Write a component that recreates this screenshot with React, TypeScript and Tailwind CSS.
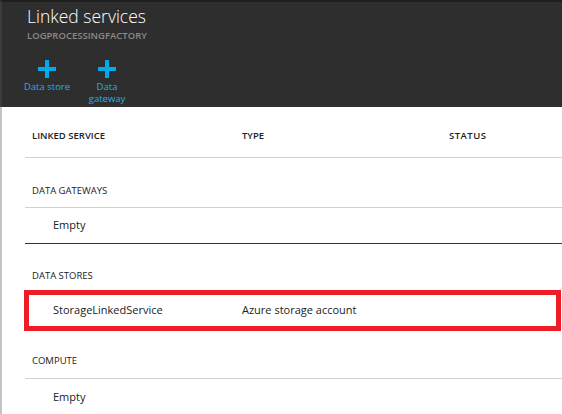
import { ReactNode } from 'react'

const font = { fontFamily: '"Open Sans", "Liberation Sans", sans-serif' }

function PlusIcon() {
  return (
    <svg width="18" height="18" viewBox="0 0 18 18" className="block">
      <rect x="7" y="0" width="4" height="18" fill="#00abec" />
      <rect x="0" y="7" width="18" height="4" fill="#00abec" />
    </svg>
  )
}

function Command({ label }: { label: ReactNode }) {
  return (
    <div className="flex w-[56px] flex-col items-center">
      <PlusIcon />
      <div className="mt-[3px] text-center text-[9.5px] leading-[12px] text-[#1fb0e8]">{label}</div>
    </div>
  )
}

function SectionTitle({ children, className }: { children: ReactNode; className: string }) {
  return (
    <div className={`flex items-end border-b border-[#d0d0d0] pl-[7px] text-[9.5px] uppercase text-[#222] ${className}`}>
      {children}
    </div>
  )
}

export default function App() {
  return (
    <div className="h-[414px] w-[562px] overflow-hidden bg-white" style={font}>
      <div className="h-[107px] border-t-2 border-l-2 border-t-[#1e1e1e] border-l-[#3c3c3c] bg-[#2e2e2e]">
        <div className="pl-[25px] pt-[3px]">
          <h1 className="text-[17.5px] font-light leading-[22px] text-white">Linked services</h1>
          <p className="mt-[3px] text-[9.5px] font-semibold leading-[12px] text-[#8a8a8a]">LOGPROCESSINGFACTORY</p>
        </div>
        <div className="mt-[18px] flex gap-[4px] pl-[17px]">
          <Command label="Data store" />
          <Command label={<>Data<br />gateway</>} />
        </div>
      </div>

      <div className="h-[307px] border-l-2 border-l-[#c4c4c4] pl-[23px]">
        <div className="flex h-[51px] items-end border-b border-[#d0d0d0] pb-[14px] pl-[7px] text-[9.5px] font-semibold text-[#222]">
          <div className="w-[210px]">LINKED SERVICE</div>
          <div className="w-[207px]">TYPE</div>
          <div className="tracking-[0.5px]">STATUS</div>
        </div>

        <SectionTitle className="h-[50px] pb-[9px]">Data gateways</SectionTitle>
        <div className="flex h-[36px] items-center border-b border-[#333] pl-[28px] text-[11px] text-[#222]">Empty</div>

        <div className="flex h-[46px] items-end pb-[7px] pl-[7px] text-[9.5px] uppercase text-[#222]">Data stores</div>
        <div className="-ml-px mr-px flex h-[41px] items-center border-[5px] border-[#ee1c25] pl-[24px] text-[11px] text-[#222]">
          <div className="w-[189px]">StorageLinkedService</div>
          <div>Azure storage account</div>
        </div>

        <SectionTitle className="h-[48px] pb-[10px]">Compute</SectionTitle>
        <div className="flex h-[36px] items-center pl-[28px] text-[11px] text-[#222]">Empty</div>
      </div>
    </div>
  )
}
